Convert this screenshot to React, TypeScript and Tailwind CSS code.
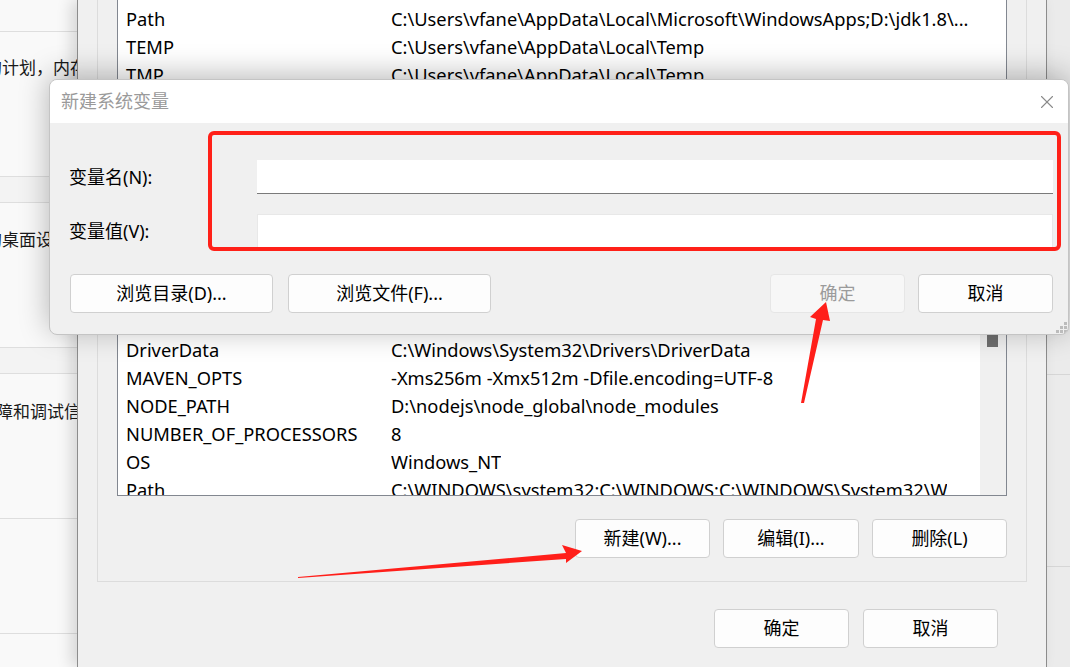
import { X } from "lucide-react";

const FONT = { fontFamily: '"Noto Sans", "Noto Sans CJK SC", sans-serif' };

const userVars = [
  ["Path", "C:\\Users\\vfane\\AppData\\Local\\Microsoft\\WindowsApps;D:\\jdk1.8\\..."],
  ["TEMP", "C:\\Users\\vfane\\AppData\\Local\\Temp"],
  ["TMP", "C:\\Users\\vfane\\AppData\\Local\\Temp"],
];

const systemVars = [
  ["DriverData", "C:\\Windows\\System32\\Drivers\\DriverData"],
  ["MAVEN_OPTS", "-Xms256m -Xmx512m -Dfile.encoding=UTF-8"],
  ["NODE_PATH", "D:\\nodejs\\node_global\\node_modules"],
  ["NUMBER_OF_PROCESSORS", "8"],
  ["OS", "Windows_NT"],
  ["Path", "C:\\WINDOWS\\system32;C:\\WINDOWS;C:\\WINDOWS\\System32\\W"],
];

function VarRow({ name, value }: { name: string; value: string }) {
  return (
    <div className="flex h-[28px] items-center whitespace-nowrap text-[18.3px] text-black">
      <div className="w-[273px] shrink-0 pl-[8px]">{name}</div>
      <div className="overflow-hidden">{value}</div>
    </div>
  );
}

function WinButton({
  label,
  width,
  disabled,
}: {
  label: string;
  width: string;
  disabled?: boolean;
}) {
  return (
    <button
      className={`${width} h-[39px] shrink-0 rounded-[4px] border text-[18px] ${
        disabled
          ? "border-[#e6e6e6] bg-[#f7f7f7] text-[#9b9b9b]"
          : "border-[#d0d0d0] bg-[#fdfdfd] text-black"
      }`}
    >
      {label}
    </button>
  );
}

function SettingsPanel() {
  return (
    <div className="flex w-[77px] shrink-0 flex-col overflow-hidden bg-[#f9f9f9] text-[17px] text-[#1a1a1a] whitespace-nowrap">
      <div className="h-[32px] shrink-0 border-b border-[#dedede]" />
      <div className="h-[145px] shrink-0 border-b border-[#dedede] pt-[24px] leading-[24px]">
        <div className="ml-[-15px]">的计划，内存</div>
      </div>
      <div className="h-[26px] shrink-0 border-b border-[#dedede] bg-[#f3f3f3]" />
      <div className="h-[145px] shrink-0 border-b border-[#dedede] pt-[25px] leading-[24px]">
        <div className="ml-[-15px]">的桌面设置</div>
      </div>
      <div className="h-[26px] shrink-0 border-b border-[#dedede] bg-[#f3f3f3]" />
      <div className="h-[145px] shrink-0 border-b border-[#dedede] pt-[26px] leading-[24px]">
        <div className="ml-[-21px]">故障和调试信息</div>
      </div>
      <div className="h-[115px] shrink-0 border-b border-[#dedede]" />
    </div>
  );
}

function EnvWindow() {
  return (
    <div className="relative z-10 flex w-[970px] shrink-0 flex-col border-x border-[#8c8c8c] bg-[#f0f0f0] px-[19px] shadow-[-6px_0_14px_rgba(0,0,0,0.14)]">
      {/* user variables */}
      <div className="h-[230px] shrink-0 border-x border-b border-[#dcdcdc] px-[19px]">
        <div className="h-[190px] border-x border-b border-[#828790] bg-white pt-[5px]">
          {userVars.map(([n, v]) => (
            <VarRow key={n} name={n} value={v} />
          ))}
        </div>
      </div>

      {/* system variables */}
      <div className="flex shrink-0 flex-col border border-[#dcdcdc] px-[19px] pt-[77px] pb-[23px]">
        <div className="flex h-[188px] overflow-hidden border border-[#828790] bg-white">
          <div className="min-w-0 flex-1 pt-[27px]">
            {systemVars.map(([n, v]) => (
              <VarRow key={n} name={n} value={v} />
            ))}
          </div>
          <div className="w-[26px] shrink-0 bg-[#f0f0f0] pt-[26px] pl-[7px]">
            <div className="h-[12px] w-[11px] bg-[#6f6f6f]" />
          </div>
        </div>
        <div className="mt-[23px] flex justify-end gap-[13px]">
          <WinButton label="新建(W)..." width="w-[135px]" />
          <WinButton label="编辑(I)..." width="w-[136px]" />
          <WinButton label="删除(L)" width="w-[135px]" />
        </div>
      </div>

      <div className="mt-[27px] flex justify-end gap-[14px] pr-[29px]">
        <WinButton label="确定" width="w-[135px]" />
        <WinButton label="取消" width="w-[135px]" />
      </div>
    </div>
  );
}

function NewVarDialog() {
  return (
    <div className="absolute left-[49px] top-[79px] z-20 flex h-[256px] w-[1020px] flex-col overflow-hidden rounded-[8px] border border-[#c4c4c4] bg-[#f0f0f0] shadow-[0_-4px_30px_rgba(0,0,0,0.28)]">
      <div className="flex h-[43px] shrink-0 items-center justify-between bg-white pl-[11px] pr-[10px]">
        <span className="text-[18px] text-[#9a9a9a]">新建系统变量</span>
        <X size={22} strokeWidth={1.2} className="text-[#8a8a8a]" />
      </div>
      <div className="relative flex flex-1 flex-col pt-[37px] pr-[15px] pl-[19px]">
        <div className="flex h-[34px] items-center">
          <label className="w-[188px] shrink-0 text-[18px] text-black">变量名(N):</label>
          <div className="h-full flex-1 border-b border-[#7a7a7a] bg-white" />
        </div>
        <div className="mt-[20px] flex h-[34px] items-center">
          <label className="w-[188px] shrink-0 text-[18px] text-black">变量值(V):</label>
          <div className="h-full flex-1 border border-[#e8e8e8] bg-white" />
        </div>
        <div className="mt-[26px] flex items-center pl-[1px]">
          <div className="flex gap-[15px]">
            <WinButton label="浏览目录(D)..." width="w-[203px]" />
            <WinButton label="浏览文件(F)..." width="w-[203px]" />
          </div>
          <div className="ml-auto flex gap-[13px]">
            <WinButton label="确定" width="w-[135px]" disabled />
            <WinButton label="取消" width="w-[135px]" />
          </div>
        </div>

        {/* annotation box */}
        <div className="absolute left-[158px] top-[8px] h-[120px] w-[853px] rounded-[6px] border-[4px] border-[#ff2018]" />

        {/* resize grip */}
        <svg className="absolute bottom-[1px] right-[1px]" width="11" height="11" viewBox="0 0 11 11">
          <rect x="8" y="0" width="3" height="3" fill="#bcbcbc" />
          <rect x="4" y="4" width="3" height="3" fill="#bcbcbc" />
          <rect x="8" y="4" width="3" height="3" fill="#bcbcbc" />
          <rect x="0" y="8" width="3" height="3" fill="#bcbcbc" />
          <rect x="4" y="8" width="3" height="3" fill="#bcbcbc" />
          <rect x="8" y="8" width="3" height="3" fill="#bcbcbc" />
        </svg>
      </div>
    </div>
  );
}

export default function App() {
  return (
    <div className="relative h-[667px] w-[1070px] overflow-hidden bg-[#f0f0f0]" style={FONT}>
      <div className="flex h-full">
        <SettingsPanel />
        <EnvWindow />
        <div className="flex flex-1 flex-col bg-[#ebebeb]">
          <div className="h-[375px] shrink-0 border-b border-[#d6d6d6]" />
          <div className="h-[192px] shrink-0 border-b border-[#d6d6d6]" />
        </div>
      </div>

      <NewVarDialog />

      {/* red arrows */}
      <svg
        className="pointer-events-none absolute inset-0 z-30"
        width="1070"
        height="667"
        viewBox="0 0 1070 667"
      >
        <polygon
          points="801,403 816,319 810,317 826,302 830,321 823,320 804,403"
          fill="#ff1f1a"
        />
        <polygon
          points="298,577 566,553 562,545 582,551 566,563 566,559 298,578"
          fill="#ff1f1a"
        />
      </svg>
    </div>
  );
}
